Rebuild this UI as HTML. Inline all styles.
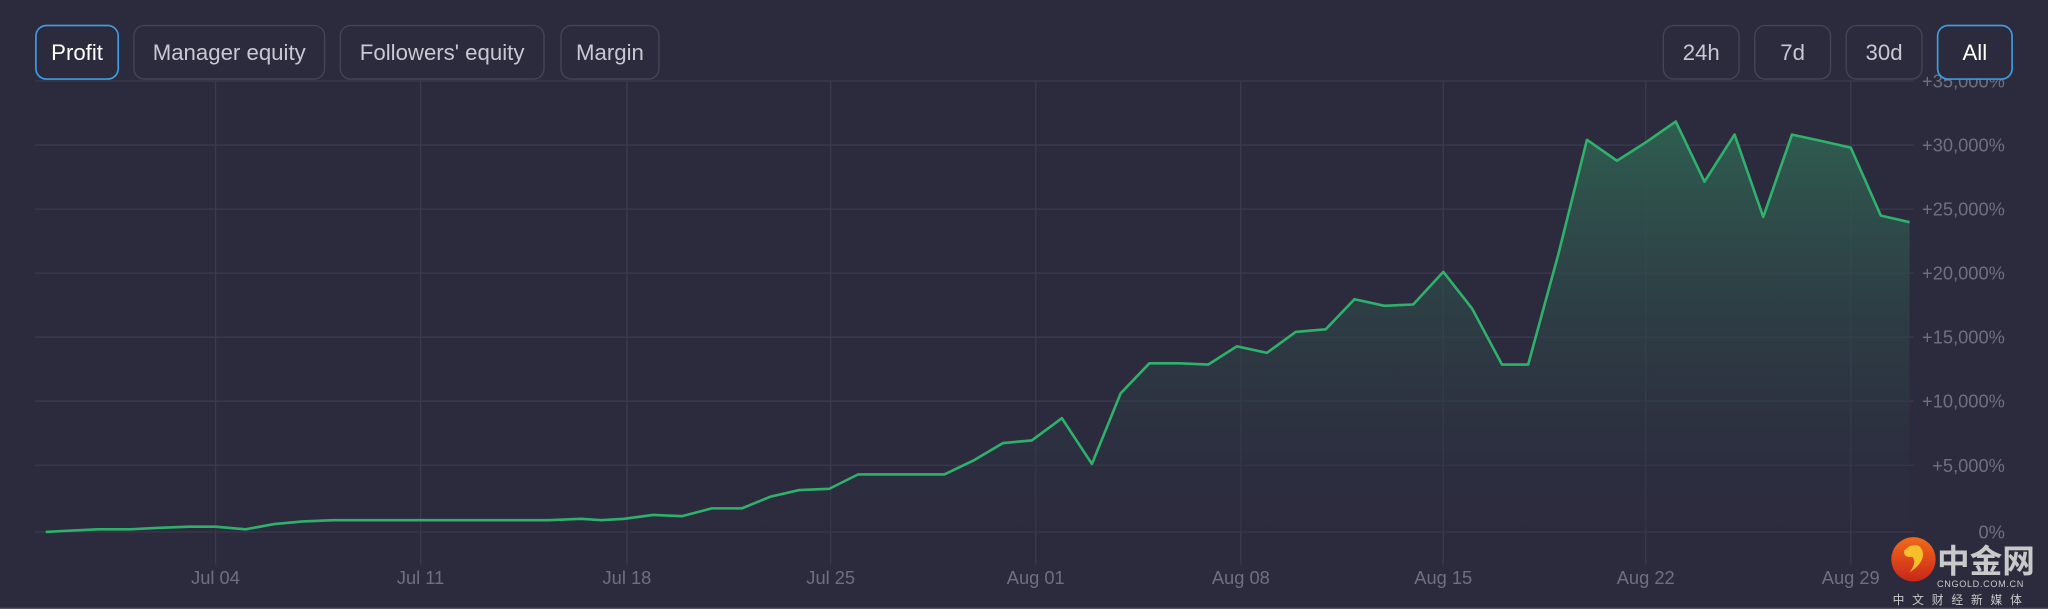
<!DOCTYPE html>
<html><head><meta charset="utf-8"><style>
html,body{margin:0;padding:0;background:#2c2b3e;width:2048px;height:609px;overflow:hidden}
svg{display:block}
text{font-family:"Liberation Sans","Noto Sans CJK SC",sans-serif}
</style></head><body>
<svg width="2048" height="609" viewBox="0 0 1568 466" preserveAspectRatio="none">
<defs>
<linearGradient id="g" x1="0" y1="0" x2="0" y2="1">
<stop offset="0" stop-color="#2f5e50"/>
<stop offset="1" stop-color="#2c2b3e" stop-opacity="0.3"/>
</linearGradient>
<linearGradient id="lg" x1="0" y1="0" x2="0" y2="1">
<stop offset="0" stop-color="#f26a1b"/><stop offset="1" stop-color="#c8261a"/>
</linearGradient>
</defs>
<rect width="1568" height="466" fill="#2c2b3e"/>
<g stroke="#3a3a4e" stroke-width="1">
<line x1="27" y1="62" x2="1465" y2="62"/>
<line x1="27" y1="111" x2="1465" y2="111"/>
<line x1="27" y1="160" x2="1465" y2="160"/>
<line x1="27" y1="209" x2="1465" y2="209"/>
<line x1="27" y1="258" x2="1465" y2="258"/>
<line x1="27" y1="307" x2="1465" y2="307"/>
<line x1="27" y1="356" x2="1465" y2="356"/>
<line x1="27" y1="407" x2="1465" y2="407"/>
<line x1="165" y1="62" x2="165" y2="432"/>
<line x1="322" y1="62" x2="322" y2="432"/>
<line x1="480" y1="62" x2="480" y2="432"/>
<line x1="636" y1="62" x2="636" y2="432"/>
<line x1="793" y1="62" x2="793" y2="432"/>
<line x1="950" y1="62" x2="950" y2="432"/>
<line x1="1105" y1="62" x2="1105" y2="432"/>
<line x1="1260" y1="62" x2="1260" y2="432"/>
<line x1="1417" y1="62" x2="1417" y2="432"/>
</g>
<path fill="url(#g)" d="M35,407 L55,406 75,405 100,405 120,404 145,403 165,403 188,405 210,401 232,399 255,398 280,398 300,398 322,398 345,398 370,398 395,398 420,398 445,397 460,398 478,397 500,394 522,395 545,389 568,389 590,380 612,375 635,374 657,363 680,363 702,363 723,363 746,352 768,339 790,337 813,320 836,355 858,301 880,278 903,278 925,279 947,265 970,270 992,254 1015,252 1037,229 1060,234 1082,233 1105,208 1127,236 1150,279 1170,279 1193,195 1215,107 1238,123 1260,109 1283,93 1305,139 1328,103 1350,166 1372,103 1395,108 1417,113 1440,165 1462,170 L1462,407 Z"/>
<polyline fill="none" stroke="#2fb16c" stroke-width="2" stroke-linejoin="round" points="35,407 55,406 75,405 100,405 120,404 145,403 165,403 188,405 210,401 232,399 255,398 280,398 300,398 322,398 345,398 370,398 395,398 420,398 445,397 460,398 478,397 500,394 522,395 545,389 568,389 590,380 612,375 635,374 657,363 680,363 702,363 723,363 746,352 768,339 790,337 813,320 836,355 858,301 880,278 903,278 925,279 947,265 970,270 992,254 1015,252 1037,229 1060,234 1082,233 1105,208 1127,236 1150,279 1170,279 1193,195 1215,107 1238,123 1260,109 1283,93 1305,139 1328,103 1350,166 1372,103 1395,108 1417,113 1440,165 1462,170"/>
<g fill="#6f6f80" font-size="14" text-anchor="end">
<text x="1535" y="67">+35,000%</text>
<text x="1535" y="116">+30,000%</text>
<text x="1535" y="165">+25,000%</text>
<text x="1535" y="214">+20,000%</text>
<text x="1535" y="263">+15,000%</text>
<text x="1535" y="312">+10,000%</text>
<text x="1535" y="361">+5,000%</text>
<text x="1535" y="412">0%</text>
</g>
<g fill="#6f6f80" font-size="14" text-anchor="middle">
<text x="165" y="447">Jul 04</text>
<text x="322" y="447">Jul 11</text>
<text x="480" y="447">Jul 18</text>
<text x="636" y="447">Jul 25</text>
<text x="793" y="447">Aug 01</text>
<text x="950" y="447">Aug 08</text>
<text x="1105" y="447">Aug 15</text>
<text x="1260" y="447">Aug 22</text>
<text x="1417" y="447">Aug 29</text>
</g>
<g font-size="17" text-anchor="middle" fill="#c8c8d2">
<rect x="27.5" y="19.5" width="63" height="41" rx="8" fill="#2c2b3e" stroke="#3d9be0" stroke-width="1.3"/>
<text x="59" y="46" fill="#fff">Profit</text>
<rect x="102.5" y="19.5" width="146" height="41" rx="8" fill="none" stroke="#45455a"/>
<text x="175.5" y="46">Manager equity</text>
<rect x="260.5" y="19.5" width="156" height="41" rx="8" fill="none" stroke="#45455a"/>
<text x="338.5" y="46">Followers' equity</text>
<rect x="429.5" y="19.5" width="75" height="41" rx="8" fill="none" stroke="#45455a"/>
<text x="467" y="46">Margin</text>
<rect x="1273.5" y="19.5" width="58" height="41" rx="8" fill="none" stroke="#45455a"/>
<text x="1302.5" y="46">24h</text>
<rect x="1343.5" y="19.5" width="58" height="41" rx="8" fill="none" stroke="#45455a"/>
<text x="1372.5" y="46">7d</text>
<rect x="1413.5" y="19.5" width="58" height="41" rx="8" fill="none" stroke="#45455a"/>
<text x="1442.5" y="46">30d</text>
<rect x="1483.5" y="19.5" width="57" height="41" rx="8" fill="#2c2b3e" stroke="#3d9be0" stroke-width="1.3"/>
<text x="1512" y="46" fill="#fff">All</text>
</g>
<circle cx="1465" cy="428" r="17" fill="url(#lg)"/>
<path d="M1462,418 q8,-3 10,4 q2,8 -10,16 q6,-8 2,-12 q-7,1 -6,-5 z" fill="#f7c02b"/>
<text x="1483" y="438" font-size="25" font-weight="bold" fill="#c9c9c9">中金网</text>
<text x="1483" y="449" font-size="7" fill="#c9c9c9" letter-spacing="0.5">CNGOLD.COM.CN</text>
<text x="1449" y="462" font-size="9" fill="#c9c9c9" letter-spacing="6">中文财经新媒体</text>
<line x1="0" y1="465.5" x2="1568" y2="465.5" stroke="#55556a"/>
</svg>
</body></html>
